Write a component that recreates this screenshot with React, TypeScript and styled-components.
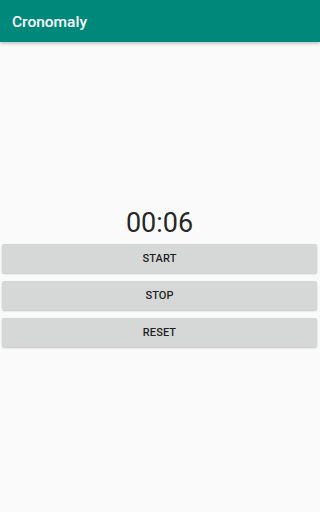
import React from 'react';
import styled, { createGlobalStyle } from 'styled-components';

const GlobalStyle = createGlobalStyle`
  html, body {
    margin: 0;
    padding: 0;
    height: 100%;
    background: #fafafa;
  }
  #root {
    height: 100%;
  }
`;

export default function App() {
  return (
    <>
      <GlobalStyle />
      <Screen>
        <AppBar>
          <Title>Cronomaly</Title>
        </AppBar>
        <Content>
          <Timer>00:06</Timer>
          <Buttons>
            <ActionButton>START</ActionButton>
            <ActionButton>STOP</ActionButton>
            <ActionButton>RESET</ActionButton>
          </Buttons>
        </Content>
      </Screen>
    </>
  );
}

const Screen = styled.div`
  display: flex;
  flex-direction: column;
  height: 512px;
  background: #fafafa;
  font-family: Roboto, 'Liberation Sans', sans-serif;
`;

const AppBar = styled.header`
  position: relative;
  z-index: 1;
  display: flex;
  align-items: center;
  height: 42px;
  padding: 0 12px;
  background: #00897b;
  box-shadow: 0 1px 4px rgba(0, 0, 0, 0.3);
`;

const Title = styled.h1`
  margin: 0;
  color: #ffffff;
  font-size: 15.5px;
  font-weight: 500;
  line-height: 20px;
  margin-top: 1px;
`;

const Content = styled.main`
  flex: 1;
  display: flex;
  flex-direction: column;
  justify-content: center;
  padding: 0 3px 0 2px;
`;

const Timer = styled.div`
  margin-bottom: 5px;
  color: rgba(0, 0, 0, 0.87);
  font-size: 27px;
  line-height: 32px;
  text-align: center;
`;

const Buttons = styled.div`
  display: flex;
  flex-direction: column;
  gap: 8.4px;
`;

const ActionButton = styled.button`
  height: 29px;
  padding: 0;
  border: none;
  border-radius: 2px;
  background: #d6d7d7;
  box-shadow: 0 1px 2px rgba(0, 0, 0, 0.22);
  color: rgba(0, 0, 0, 0.87);
  font-family: Roboto, 'Liberation Sans', sans-serif;
  font-size: 11px;
  font-weight: 500;
  letter-spacing: 0.1px;
  cursor: pointer;
`;
